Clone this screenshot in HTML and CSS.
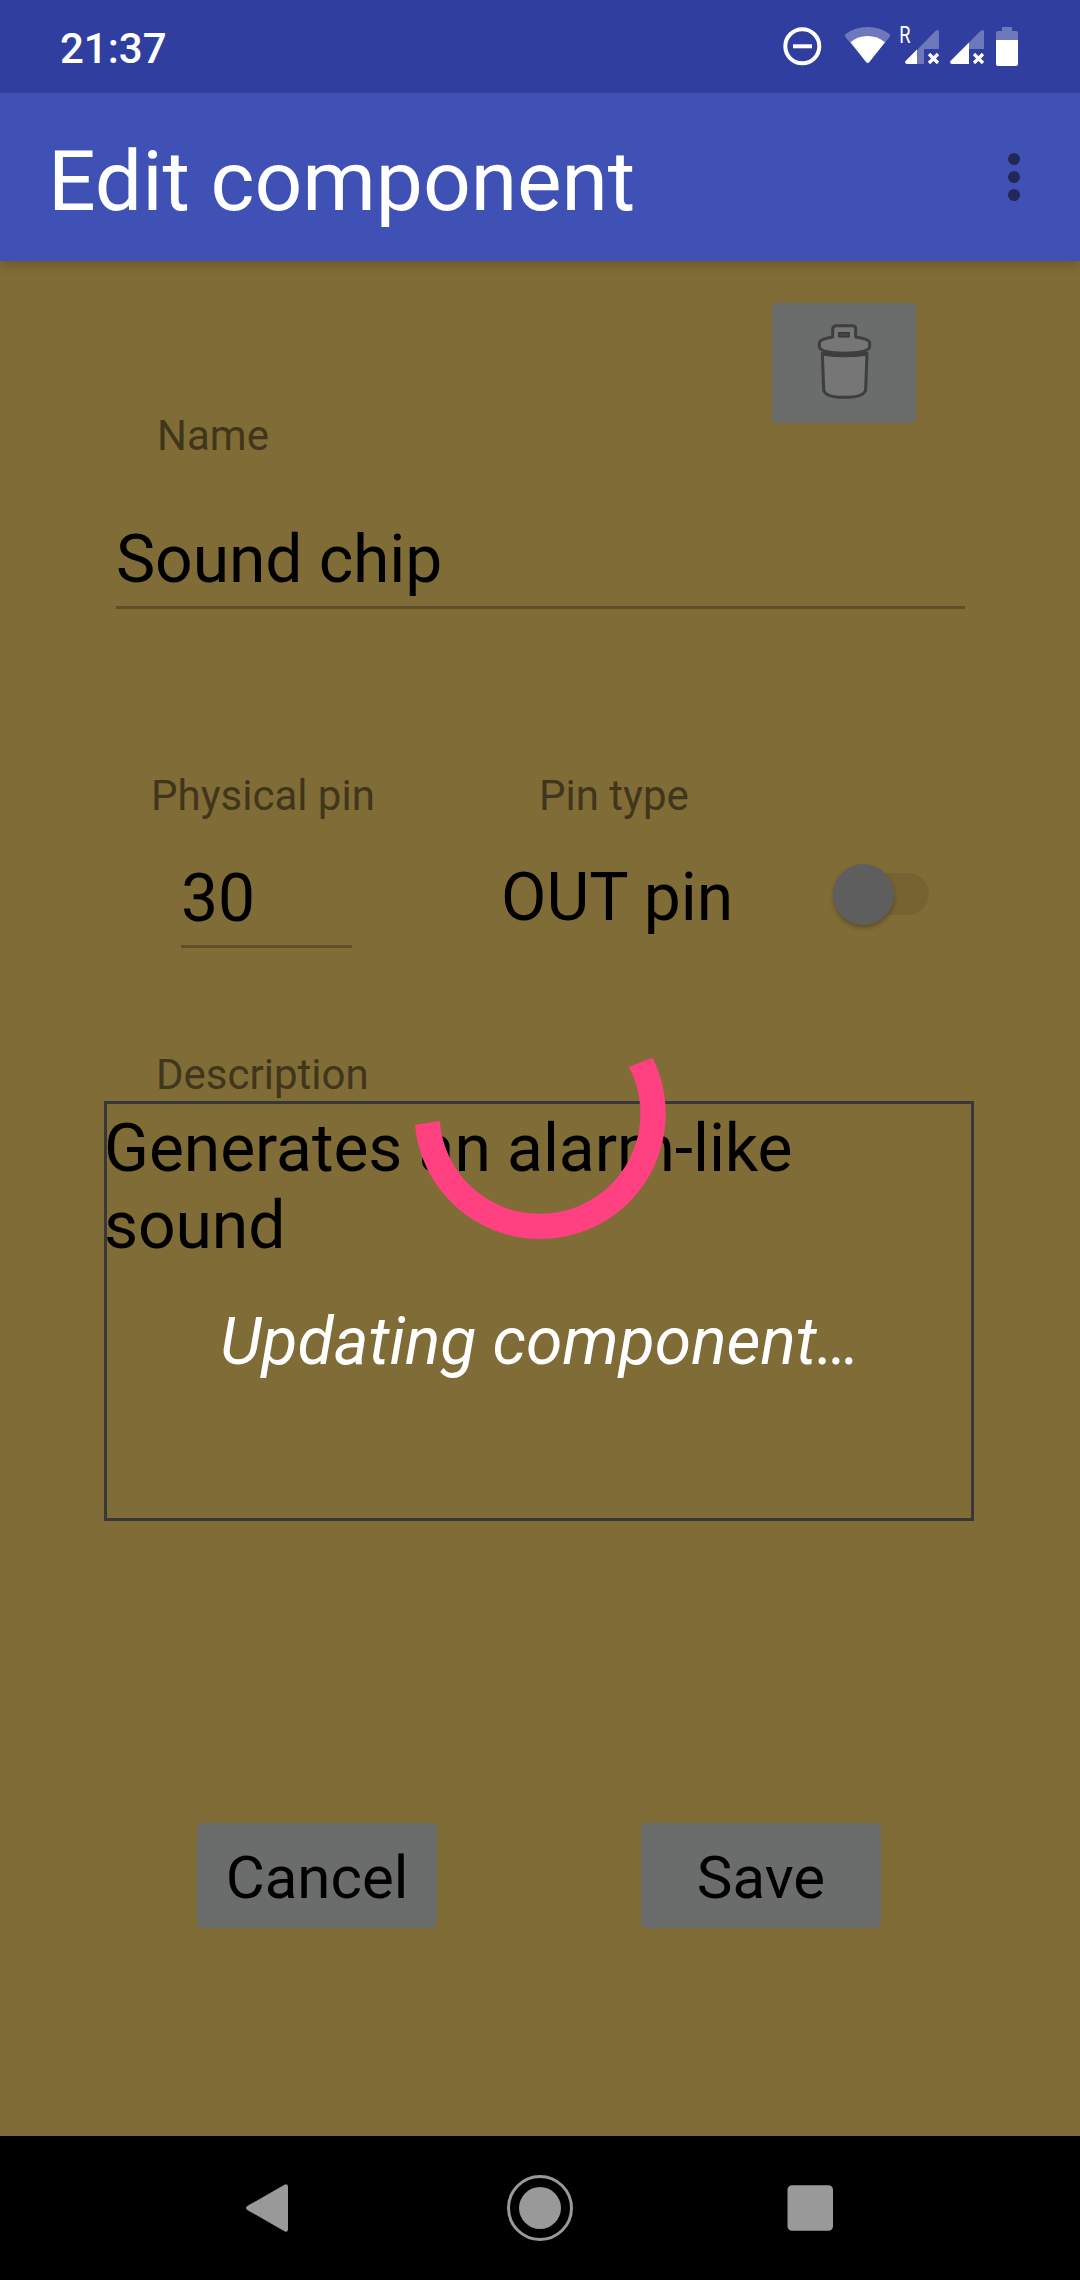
FILE: index.html
```html
<!DOCTYPE html>
<html lang="en">
<head>
<meta charset="utf-8">
<title>Edit component</title>
<link rel="stylesheet" href="styles.css">
</head>
<body>
<div class="screen">
  <header class="status">
    <span class="clock">21:37</span>
    <svg class="status-icons" viewBox="780 0 250 93" width="250" height="93">
      <circle cx="802.3" cy="46.3" r="17" fill="none" stroke="#fff" stroke-width="4"/>
      <path d="M793 44.3h19v4h-19z" fill="#fff"/>
      <path d="M867.5 63 845.3 37Q844 35.4 845.6 34Q855 27 867.5 27Q880 27 889.4 34Q891 35.4 889.7 37Z" fill="#fff" fill-opacity=".3"/>
      <path d="M866 62 850.5 42.3Q858 36 867.7 36Q877 36 885 42.3L869.4 62Q867.7 64 866 62Z" fill="#fff"/>
      <text class="roaming" transform="translate(899.2 42.6) scale(.76 1)">R</text>
      <path d="M917 50 935.5 31Q939 28.6 939 32V49H924V64H917Z" fill="#fff" fill-opacity=".3"/>
      <path d="M917 49.5V64H907Q903.6 63.4 906 60.5Z" fill="#fff"/>
      <path d="M969 42.5 980.5 31Q984 28.6 984 32V49H969Z" fill="#fff" fill-opacity=".3"/>
      <path d="M969 42.5V64H952Q948.6 63.4 951 60.5Z" fill="#fff"/>
      <path d="M929 54l9 9m0-9-9 9M974 54l9 9m0-9-9 9" stroke="#fff" stroke-width="3.2"/>
      <path d="M1002 27h10v4h4q2 0 2 2v7h-22v-7q0-2 2-2h4z" fill="#fff" fill-opacity=".3"/>
      <path d="M996 40h22v24q0 2-2 2h-18q-2 0-2-2z" fill="#fff"/>
    </svg>
  </header>

  <div class="appbar">
    <h1 class="title">Edit component</h1>
    <svg class="menu" viewBox="0 0 12 48" width="12" height="48"><circle cx="6" cy="6" r="6"/><circle cx="6" cy="24" r="6"/><circle cx="6" cy="42" r="6"/></svg>
  </div>

  <main class="form">
    <div class="name-row">
      <label class="label">Name</label>
      <button class="button delete" aria-label="Delete">
        <svg viewBox="225 696 180 240" width="60" height="80">
          <path d="M247 790 251 898Q253 922 313 922Q374 922 377 898L381 790Z" fill="#767676" stroke="#3d3e3e" stroke-width="9" stroke-linejoin="round"/>
          <path d="M249 787Q313 801 379 787V795Q313 804 249 795Z" fill="#3d3e3e" stroke="#3d3e3e" stroke-width="4"/>
          <path d="M278 741V717Q279 707 289 707H337Q347 707 347 717V741Q388 747 389 758V770Q388 788 313 790Q239 788 238 770V758Q240 747 278 741Z" fill="#767676" stroke="#3d3e3e" stroke-width="9" stroke-linejoin="round"/>
          <path d="M296 728h32v13h-32z" fill="#444545" stroke="#303131" stroke-width="3"/>
        </svg>
      </button>
    </div>
    <div class="field name-field">Sound chip</div>

    <div class="pins">
      <div class="pin-number">
        <label class="label pin-label">Physical pin</label>
        <div class="field pin-field">30</div>
      </div>
      <div class="pin-type">
        <label class="label type-label">Pin type</label>
        <div class="type-row">
          <span class="type-value">OUT pin</span>
          <span class="switch"><span class="thumb"></span></span>
        </div>
      </div>
    </div>

    <label class="label description-label">Description</label>
    <div class="description"><p class="description-text">Generates an alarm-like sound</p></div>

    <div class="actions">
      <button class="button action">Cancel</button>
      <button class="button action">Save</button>
    </div>

    <div class="loading">
      <svg class="spinner" viewBox="414 988 252 252" width="252" height="252"><path d="M652.6 1057.7A125.4 125.4 0 0 1 540 1239A125.4 125.4 0 0 1 415 1125L439.7 1121A100.4 100.4 0 0 0 540 1213.8A100.4 100.4 0 0 0 628.9 1066.7Z" fill="#ff4081"/></svg>
      <p class="loading-text">Updating component…</p>
    </div>
  </main>

  <nav class="navbar">
    <svg viewBox="246 2136 588 144" width="588" height="144" fill="#999">
      <path d="M247.2 2206 284.5 2184.8Q288 2183 288 2187V2229Q288 2233 284.5 2231.2L247.2 2210Q245 2208 247.2 2206Z"/>
      <circle cx="540" cy="2208" r="21"/>
      <circle cx="540" cy="2208" r="31.5" fill="none" stroke="#999" stroke-width="3"/>
      <rect x="787.5" y="2185.2" width="45.5" height="45.6" rx="4.5"/>
    </svg>
  </nav>
</div>
</body>
</html>
```
FILE: styles.css
```css
* { box-sizing: border-box; margin: 0; padding: 0; }
body { background: #806c36; font-family: Roboto, sans-serif; color: #000; }
.screen { width: 1080px; height: 2280px; display: flex; flex-direction: column; overflow: hidden; }

.status { height: 93px; flex: none; background: #303f9f; display: flex; justify-content: space-between; padding: 0 50px 0 60px; color: #fff; position: relative; z-index: 2; }
.clock { font-size: 42px; font-weight: 500; line-height: 50px; margin-top: 24px; }
.roaming { font-size: 24px; fill: #fff; }

.appbar { height: 168px; flex: none; background: #3f51b5; display: flex; justify-content: space-between; padding: 0 60px 0 48px; box-shadow: 0 3px 12px rgba(0, 0, 0, .2); z-index: 1; }
.title { color: #fff; font-size: 84px; font-weight: 400; line-height: 98px; letter-spacing: -.1px; margin-top: 40px; }
.menu { margin-top: 60px; fill: #1f2857; }

.form { flex: 1; position: relative; padding: 42px 0 0; }
.label { display: block; font-size: 42px; line-height: 50px; color: #40361b; white-space: nowrap; }
.field { font-size: 66px; line-height: 77px; height: 88px; letter-spacing: -.1px; border-bottom: 3px solid #5e4f28; }
.button { border: 0; border-radius: 6px; background: #6b6d6c; font: 400 60px/70px Roboto, sans-serif; color: #000; }

.name-row { display: flex; justify-content: space-between; height: 158px; padding: 0 164px 0 157px; }
.name-row .label { margin-top: 108px; }
.delete { width: 144px; height: 120px; display: flex; padding: 19px 0 0 43px; }
.name-field { margin: 60px 115px 0 116px; }

.pins { display: flex; margin-top: 162px; padding-left: 151px; }
.pin-number { width: 350px; }
.pin-field { width: 171px; margin: 39px 0 0 30px; }
.type-label { margin-left: 38px; }
.type-row { display: flex; align-items: flex-start; margin-top: 38px; }
.type-value { font-size: 66px; line-height: 77px; width: 332px; }
.switch { width: 96px; height: 42px; margin-top: 14px; border-radius: 21px; background: linear-gradient(90deg, transparent 30px, #776332 30px); display: flex; align-items: center; }
.thumb { width: 61px; height: 61px; flex: none; border-radius: 50%; background: #5e5e5e; box-shadow: 0 3px 4px rgba(0, 0, 0, .25); }

.description-label { margin: 102px 0 1px 156px; }
.description { width: 870px; height: 420px; margin-left: 104px; border: 3px solid #383838; padding-top: 6px; }
.description-text { font-size: 66px; line-height: 77px; letter-spacing: -.08px; margin-left: -3px; }

.actions { display: flex; justify-content: space-between; margin: 302px 199px 0 197px; }
.action { width: 240px; height: 105px; padding-top: 5px; }

/* Progress indicator shown over the form while the update is saved */
.loading { position: absolute; top: 727px; left: 0; right: 0; display: flex; flex-direction: column; align-items: center; }
.loading-text { margin-top: 63px; font-size: 66px; line-height: 77px; font-style: italic; color: #fff; }

.navbar { height: 144px; flex: none; background: #000; padding-left: 246px; }
.navbar svg { display: block; }
```
